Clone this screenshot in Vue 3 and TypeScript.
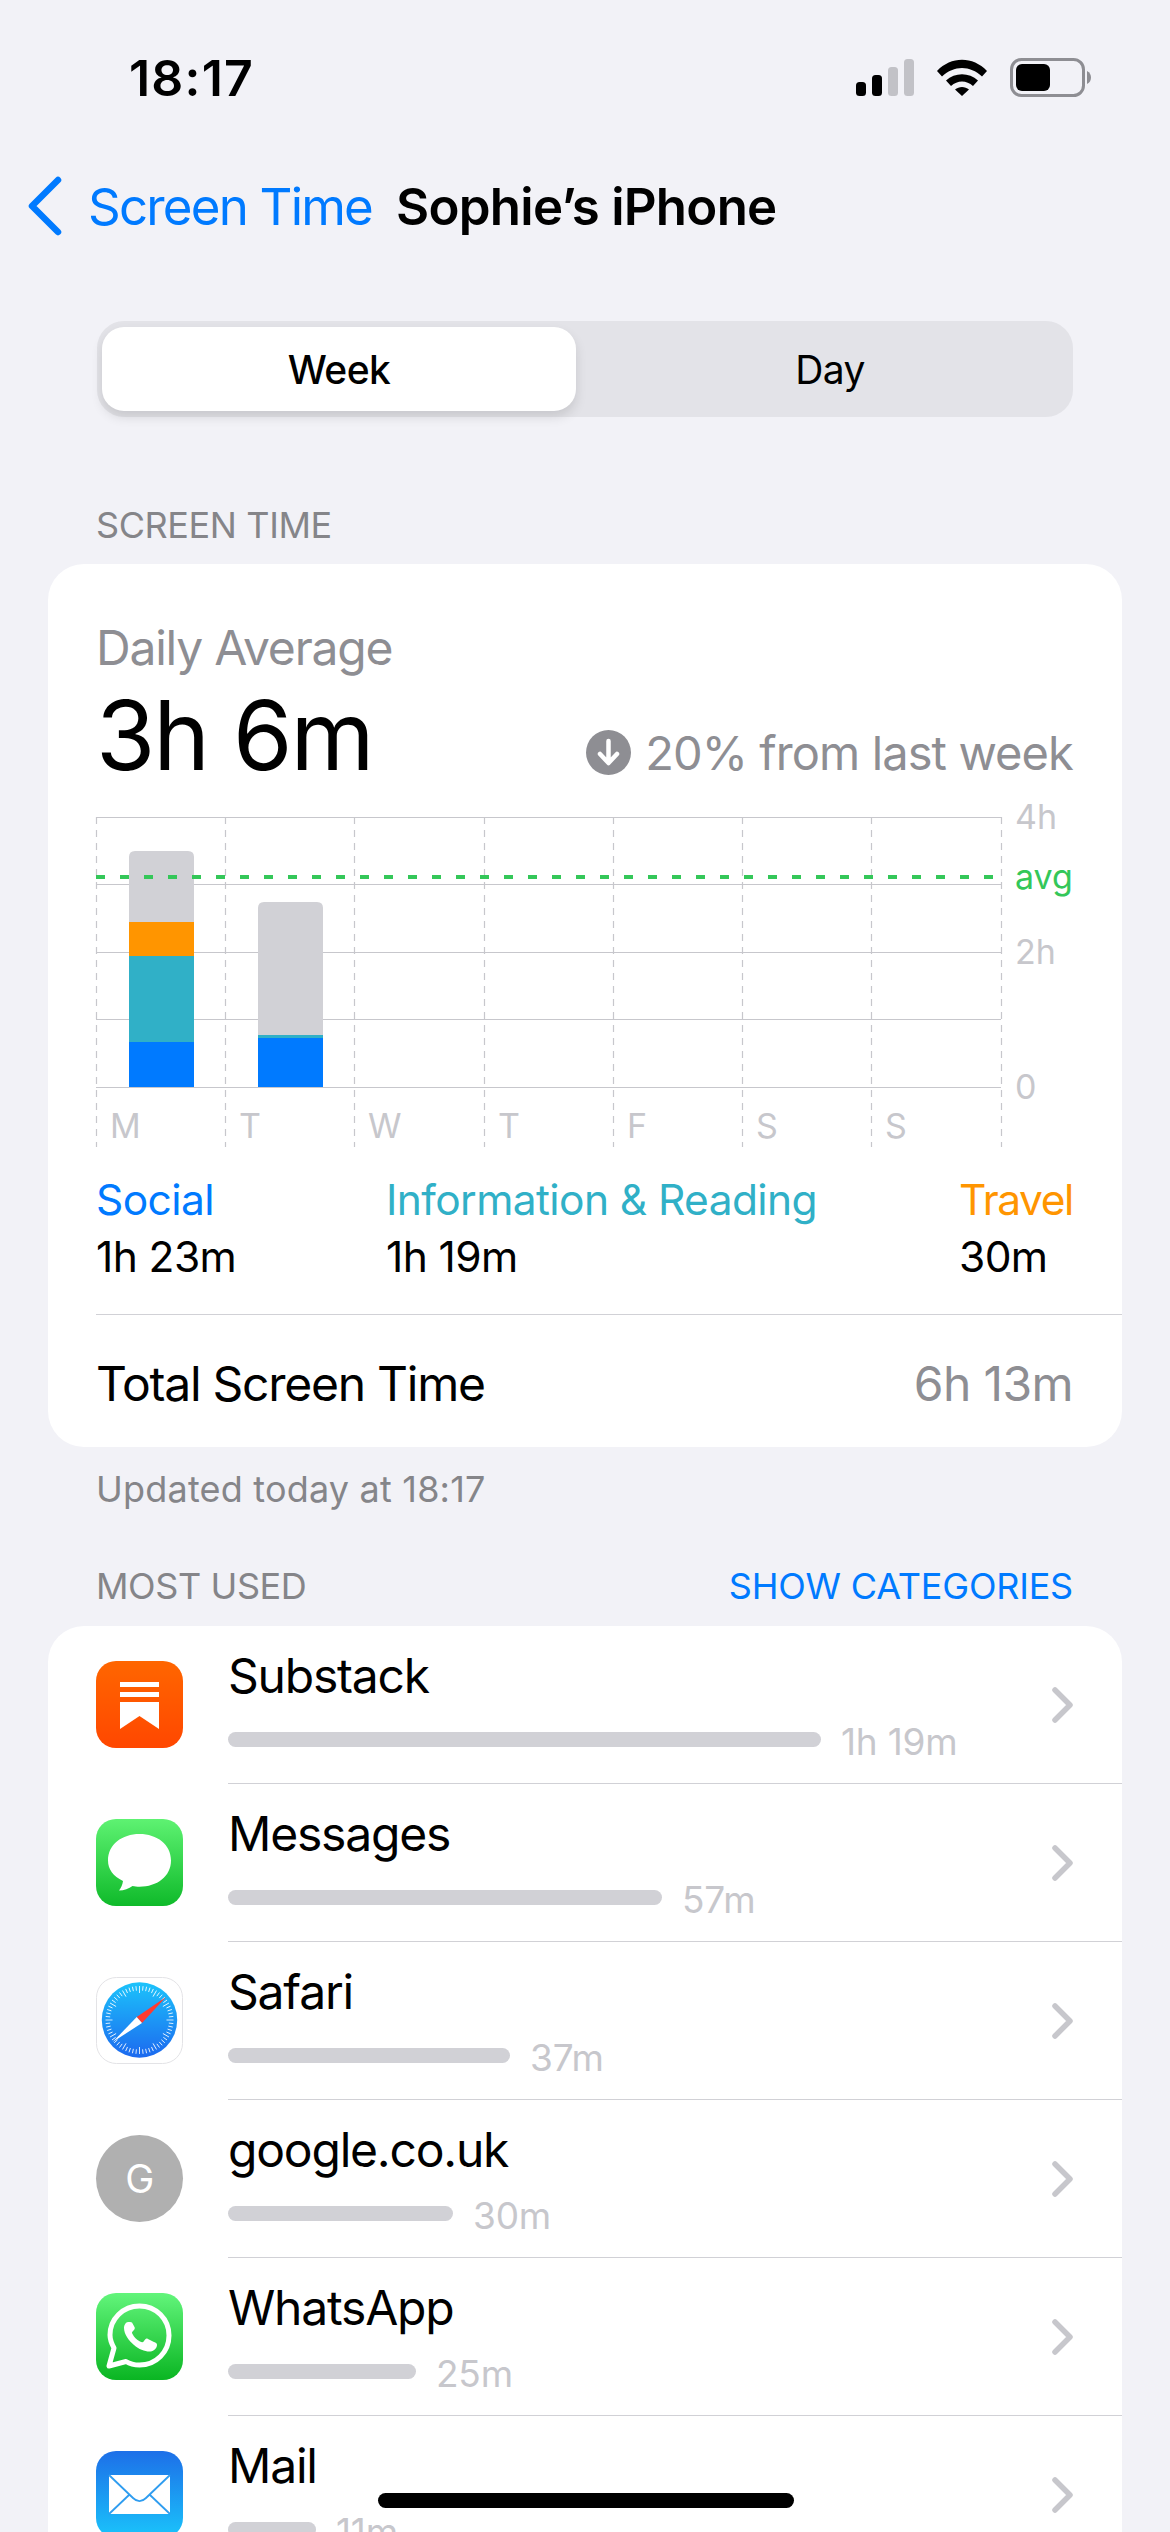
<script setup lang="ts">
interface Segment { y: number; h: number; color: string }
interface Bar { x: number; segments: Segment[] }
interface App { name: string; bar: number; time: string; icon: string }

const gridX = [96, 225, 354, 484, 613, 742, 871, 1001]
const gridY = [818, 885, 953, 1020, 1088]
const bars: Bar[] = [
  { x: 129, segments: [
    { y: 923, h: 34, color: '#ff9500' },
    { y: 957, h: 86, color: '#30b0c7' },
    { y: 1043, h: 45, color: '#007aff' },
  ] },
  { x: 258, segments: [
    { y: 1036, h: 3, color: '#30b0c7' },
    { y: 1039, h: 49, color: '#007aff' },
  ] },
]
const greys = [{ x: 129, y: 852, h: 72 }, { x: 258, y: 903, h: 134 }]
const days = ['M', 'T', 'W', 'T', 'F', 'S', 'S']
const ticks = [
  { label: '4h', y: 818, cls: 'tick' },
  { label: 'avg', y: 878, cls: 'tick green' },
  { label: '2h', y: 953, cls: 'tick' },
  { label: '0', y: 1088, cls: 'tick' },
]
const apps: App[] = [
  { name: 'Substack', bar: 593, time: '1h 19m', icon: 'substack' },
  { name: 'Messages', bar: 434, time: '57m', icon: 'messages' },
  { name: 'Safari', bar: 282, time: '37m', icon: 'safari' },
  { name: 'google.co.uk', bar: 225, time: '30m', icon: 'google' },
  { name: 'WhatsApp', bar: 188, time: '25m', icon: 'whatsapp' },
  { name: 'Mail', bar: 88, time: '11m', icon: 'mail' },
]
const safariTicks = Array.from({ length: 60 }, (_, i) => i * 6)
</script>

<template>
  <div class="screen">
    <header class="status">
      <span class="clock">18:17</span>
      <div class="status-icons">
        <svg class="signal" width="58" height="37" viewBox="0 0 58 37">
          <rect x="0" y="23" width="10" height="14" rx="3.5" fill="#000" />
          <rect x="16" y="16" width="10" height="21" rx="3.5" fill="#000" />
          <rect x="32" y="8" width="10" height="29" rx="3.5" fill="#c2c2c7" />
          <rect x="48" y="0" width="10" height="37" rx="3.5" fill="#c2c2c7" />
        </svg>
        <svg class="wifi" width="52" height="37" viewBox="0 0 52 37">
          <path d="M1 12 C15 -3 37 -3 51 12 L46 17.5 C34 6 18 6 6 17.5 Z" fill="#000" />
          <path d="M10 21.5 C19 13 33 13 42 21.5 L37 27 C30.5 21 21.5 21 15 27 Z" fill="#000" />
          <path d="M19 30.5 C23 27 29 27 33 30.5 L26 37 Z" fill="#000" />
        </svg>
        <svg class="battery" width="82" height="39" viewBox="0 0 82 39">
          <rect x="1.5" y="1.5" width="72" height="36" rx="10" fill="none" stroke="#8e8e93" stroke-width="3" />
          <rect x="6" y="6" width="34" height="27" rx="6" fill="#000" />
          <path d="M77 13 C80 14.5 81 17 81 19.5 C81 22 80 24.5 77 26 Z" fill="#8e8e93" />
        </svg>
      </div>
    </header>

    <nav class="nav">
      <svg class="back" width="36" height="60" viewBox="0 0 36 60">
        <path d="M31 4 L5 30 L31 56" fill="none" stroke="#007aff" stroke-width="6.5" stroke-linecap="round" stroke-linejoin="round" />
      </svg>
      <span class="nav-back">Screen Time</span>
      <span class="nav-title">Sophie’s iPhone</span>
    </nav>

    <div class="segment">
      <div class="seg-item active">Week</div>
      <div class="seg-item day">Day</div>
    </div>

    <div class="section-label first">SCREEN TIME</div>
    <section class="card summary">
      <div class="daily-label">Daily Average</div>
      <div class="daily-row">
        <span class="daily-value">3h 6m</span>
        <span class="delta">
          <svg width="45" height="45" viewBox="0 0 45 45">
            <circle cx="22.5" cy="22.5" r="22.5" fill="#8e8e93" />
            <path d="M22.5 11 V32 M14 24 L22.5 33 L31 24" fill="none" stroke="#fff" stroke-width="4.5" stroke-linecap="round" stroke-linejoin="round" />
          </svg>
          20% from last week
        </span>
      </div>

      <svg class="chart" width="1074" height="350" viewBox="48 800 1074 350">
        <line v-for="x in gridX" :key="x" :x1="x + 0.5" :x2="x + 0.5" y1="818" y2="1148" class="vline" />
        <line v-for="y in gridY" :key="y" x1="96" x2="1001" :y1="y + 0.5" :y2="y + 0.5" class="hline" />
        <path v-for="g in greys" :key="g.x" :d="`M${g.x} ${g.y + g.h} V${g.y + 6} Q${g.x} ${g.y} ${g.x + 6} ${g.y} H${g.x + 59} Q${g.x + 65} ${g.y} ${g.x + 65} ${g.y + 6} V${g.y + g.h} Z`" fill="#d1d1d6" />
        <template v-for="b in bars" :key="b.x">
          <rect v-for="s in b.segments" :key="s.y" :x="b.x" :y="s.y" width="65" :height="s.h" :fill="s.color" />
        </template>
        <line x1="96" x2="1001" y1="878" y2="878" class="avg" />
        <text v-for="t in ticks" :key="t.label" x="1015" :y="t.y + 12" :class="t.cls">{{ t.label }}</text>
        <text v-for="(d, i) in days" :key="i" :x="gridX[i] + 14" y="1139" class="tick">{{ d }}</text>
      </svg>

      <div class="legend">
        <div class="legend-item">
          <span class="legend-name social">Social</span>
          <span class="legend-time">1h 23m</span>
        </div>
        <div class="legend-item">
          <span class="legend-name teal">Information &amp; Reading</span>
          <span class="legend-time">1h 19m</span>
        </div>
        <div class="legend-item">
          <span class="legend-name orange">Travel</span>
          <span class="legend-time">30m</span>
        </div>
      </div>

      <div class="total">
        <span class="total-label">Total Screen Time</span>
        <span class="total-value">6h 13m</span>
      </div>
    </section>

    <div class="updated">Updated today at 18:17</div>

    <div class="section-head">
      <span class="section-label">MOST USED</span>
      <span class="section-link">SHOW CATEGORIES</span>
    </div>

    <section class="card apps">
      <div v-for="app in apps" :key="app.name" class="row">
        <div class="icon-wrap">
          <svg v-if="app.icon === 'substack'" width="87" height="87" viewBox="0 0 87 87">
            <defs>
              <linearGradient id="sub" x1="0" y1="0" x2="0" y2="1">
                <stop offset="0" stop-color="#ff6600" />
                <stop offset="1" stop-color="#ff4700" />
              </linearGradient>
            </defs>
            <rect width="87" height="87" rx="20" fill="url(#sub)" />
            <path d="M24 21 H63 V26 H24 Z M24 31 H63 V36 H24 Z M24 41 H63 V68 L43.5 55 L24 68 Z" fill="#fff" />
          </svg>
          <svg v-else-if="app.icon === 'messages'" width="87" height="87" viewBox="0 0 87 87">
            <defs>
              <linearGradient id="msg" x1="0" y1="0" x2="0" y2="1">
                <stop offset="0" stop-color="#5ef272" />
                <stop offset="1" stop-color="#0fba2a" />
              </linearGradient>
            </defs>
            <rect width="87" height="87" rx="20" fill="url(#msg)" />
            <path d="M43.500 15 C26 15 12 25.500 12 41.500 C12 50.500 17 57 27 62 C26.500 66 25 69 23 71.500 C28 71.500 33 69.500 36.500 67 C38.500 67.500 41 67.700 43.500 67.700 C61 67.700 75 57.500 75 41.500 C75 25.500 61 15 43.500 15 Z" fill="#fff" />
          </svg>
          <svg v-else-if="app.icon === 'safari'" width="87" height="87" viewBox="0 0 87 87">
            <defs>
              <linearGradient id="saf" x1="0" y1="0" x2="0" y2="1">
                <stop offset="0" stop-color="#1cc3fb" />
                <stop offset="1" stop-color="#1c69ef" />
              </linearGradient>
            </defs>
            <rect x="0.500" y="0.500" width="86" height="86" rx="20" fill="#fff" stroke="#e3e3e6" />
            <circle cx="43.500" cy="43" r="37.700" fill="url(#saf)" />
            <line v-for="a in safariTicks" :key="a" x1="43.500" y1="9" x2="43.500" :y2="a % 30 === 0 ? 16 : 13.500" stroke="#fff" stroke-width="0.800" :transform="`rotate(${a} 43.500 43)`" />
            <path d="M70 20 L46 46 L40.700 40 Z" fill="#ff3b30" />
            <path d="M16.700 65 L40.700 40 L46 46 Z" fill="#fff" />
          </svg>
          <div v-else-if="app.icon === 'google'" class="letter-icon">G</div>
          <svg v-else-if="app.icon === 'whatsapp'" width="87" height="87" viewBox="0 0 87 87">
            <defs>
              <linearGradient id="wa" x1="0" y1="0" x2="0" y2="1">
                <stop offset="0" stop-color="#62f57b" />
                <stop offset="1" stop-color="#0ab522" />
              </linearGradient>
            </defs>
            <rect width="87" height="87" rx="20" fill="url(#wa)" />
            <path d="M13 73 L18 55 C15.500 50.500 14 46.500 14 42 C14 26 27 13 43.500 13 C60 13 73 26 73 42.500 C73 59 60 72 43.500 72 C38.500 72 34 71 30 68.500 Z" fill="none" stroke="#fff" stroke-width="5" stroke-linejoin="round" />
            <path d="M32 29 C30 29 28 32 28 35 C28 41 33 48 38 52 C43 56.500 50 59 54.500 58.500 C58 58 61 55 61 52 C61 50 60 50 58 49 L52 46 C50 45 49.500 46 48 48 C47 49.500 46 49.500 44 48.500 C40.500 46.500 38 44 36.500 41 C35.500 39.500 36 39 37.500 37.500 C39 36 39 35 38.500 34 L36 29.500 C35 28.500 33.500 29 32 29 Z" fill="#fff" />
          </svg>
          <svg v-else width="87" height="87" viewBox="0 0 87 87">
            <defs>
              <linearGradient id="mail" x1="0" y1="0" x2="0" y2="1">
                <stop offset="0" stop-color="#1d6fe8" />
                <stop offset="1" stop-color="#1ac4fb" />
              </linearGradient>
            </defs>
            <rect width="87" height="87" rx="20" fill="url(#mail)" />
            <rect x="13" y="24" width="61" height="39" fill="#fff" />
            <path d="M13 24 L37 47 C41 51 46 51 50 47 L74 24 M13 63 L33 44 M74 63 L54 44" fill="none" stroke="#2f9df0" stroke-width="1.800" />
          </svg>
        </div>
        <div class="row-body">
          <div class="row-name">{{ app.name }}</div>
          <div class="row-usage">
            <span class="usage-bar" :style="{ width: app.bar + 'px' }"></span>
            <span class="usage-time">{{ app.time }}</span>
          </div>
          <svg class="row-chev" width="24" height="38" viewBox="0 0 24 38">
            <path d="M4 4 L19 19 L4 34" fill="none" stroke="#c7c7cc" stroke-width="5.500" stroke-linecap="round" stroke-linejoin="round" />
          </svg>
        </div>
      </div>
    </section>

    <div class="home"></div>
  </div>
</template>

<style>
html, body { margin: 0; background: #f2f2f7; }
</style>

<style scoped>
.screen {
  position: relative;
  width: 1170px;
  height: 2532px;
  overflow: hidden;
  background: #f2f2f7;
  color: #000;
  font-family: Inter, "Noto Sans", sans-serif;
  letter-spacing: -0.6px;
}
.status {
  height: 156px;
  box-sizing: border-box;
  padding: 50px 78px 0 129px;
  display: flex;
  justify-content: space-between;
  align-items: flex-start;
}
.clock {
  font-size: 50px;
  font-weight: 600;
  line-height: 56px;
  letter-spacing: 1.2px;
}
.status-icons { display: flex; align-items: center; gap: 22px; padding-top: 8px; }
.nav {
  height: 100px;
  display: flex;
  align-items: center;
  padding-left: 27px;
  font-size: 51px;
  line-height: 60px;
}
.back { flex: none; }
.nav-back { color: #007aff; margin-left: 25px; letter-spacing: -1.8px; padding-top: 2px; }
.nav-title { font-weight: 600; margin-left: 24px; padding-top: 2px; letter-spacing: -0.75px; }
.segment {
  margin: 65px 97px 0;
  height: 96px;
  box-sizing: border-box;
  padding: 6px 5px;
  background: #e3e3e8;
  border-radius: 27px;
  display: grid;
  grid-template-columns: 474px 1fr;
  font-size: 39px;
  align-items: stretch;
}
.seg-item { display: flex; align-items: center; justify-content: center; font-weight: 400; }
.seg-item.day { padding-left: 16px; }
.seg-item.active {
  background: #fff;
  border-radius: 22px;
  font-weight: 500;
  box-shadow: 0 6px 12px rgba(0, 0, 0, 0.12);
}
.section-label { font-size: 36px; color: #858589; line-height: 44px; letter-spacing: -0.4px; }
.section-label.first { margin: 86px 96px 0; }
.card { background: #fff; border-radius: 36px; margin: 0 48px; }
.summary { margin-top: 17px; height: 883px; box-sizing: border-box; padding-top: 56px; position: relative; }
.daily-label { margin: 0 48px; font-size: 48px; line-height: 56px; color: #8e8e93; letter-spacing: -1.2px; }
.daily-row {
  margin: 9px 49px 0 48px;
  display: flex;
  justify-content: space-between;
  align-items: center;
  height: 100px;
}
.daily-value { font-size: 96px; line-height: 100px; letter-spacing: -2px; }
.delta {
  font-size: 47px;
  color: #8e8e93;
  display: flex;
  align-items: center;
  gap: 14px;
  padding-top: 34px;
  letter-spacing: -0.9px;
}
.chart { display: block; margin-top: 14px; overflow: visible; }
.vline { stroke: #c7c7cc; stroke-width: 1.2; stroke-dasharray: 7 6; }
.hline { stroke: #c7c7cc; stroke-width: 1; }
.avg { stroke: #34c759; stroke-width: 4; stroke-dasharray: 9 15; }
.tick { font-size: 34px; fill: #c7c7cc; letter-spacing: 0; }
.tick.green { fill: #34c759; }
.legend {
  margin: 25px 49px 0 48px;
  display: grid;
  grid-template-columns: 290px 1fr auto;
  font-size: 42.5px;
}
.legend-item { display: flex; flex-direction: column; gap: 5px; line-height: 52px; }
.social { color: #007aff; }
.teal { color: #30b0c7; }
.orange { color: #ff9500; letter-spacing: -1.4px; }
.total {
  position: absolute;
  left: 48px;
  right: 0;
  bottom: 0;
  height: 133px;
  box-sizing: border-box;
  padding: 5px 49px 0 0;
  border-top: 1.5px solid #d1d1d6;
  display: flex;
  justify-content: space-between;
  align-items: center;
  font-size: 48px;
}
.total-label { letter-spacing: -1.25px; }
.total-value { color: #8e8e93; }
.updated { margin: 20px 96px 0; font-size: 36px; line-height: 44px; color: #858589; letter-spacing: 0.2px; }
.section-head {
  margin: 53px 97px 0 96px;
  display: flex;
  justify-content: space-between;
  line-height: 44px;
}
.section-link { font-size: 36px; color: #007aff; letter-spacing: -0.2px; }
.apps { margin-top: 18px; }
.row { height: 158px; display: flex; }
.icon-wrap { width: 180px; flex: none; padding: 35px 0 0 48px; box-sizing: border-box; }
.icon-wrap svg { display: block; }
.letter-icon {
  width: 87px;
  height: 87px;
  border-radius: 50%;
  background: #b0b0b0;
  color: #fff;
  font-size: 39px;
  display: flex;
  align-items: center;
  justify-content: center;
}
.row-body {
  flex: 1;
  position: relative;
  border-bottom: 1.5px solid #d1d1d6;
  box-sizing: border-box;
}
.row-name { font-size: 48px; line-height: 60px; padding-top: 20px; letter-spacing: -1.2px; }
.row-usage { display: flex; align-items: center; gap: 20px; margin-top: 18px; height: 30px; }
.usage-bar { height: 15px; border-radius: 8px; background: #d1d1d6; }
.usage-time { font-size: 37px; color: #c7c7cc; letter-spacing: -0.2px; padding-top: 4px; }
.row-chev { position: absolute; right: 47px; top: 60px; }
.home {
  position: absolute;
  left: 378px;
  top: 2493px;
  width: 416px;
  height: 15px;
  border-radius: 8px;
  background: #000;
}
</style>
